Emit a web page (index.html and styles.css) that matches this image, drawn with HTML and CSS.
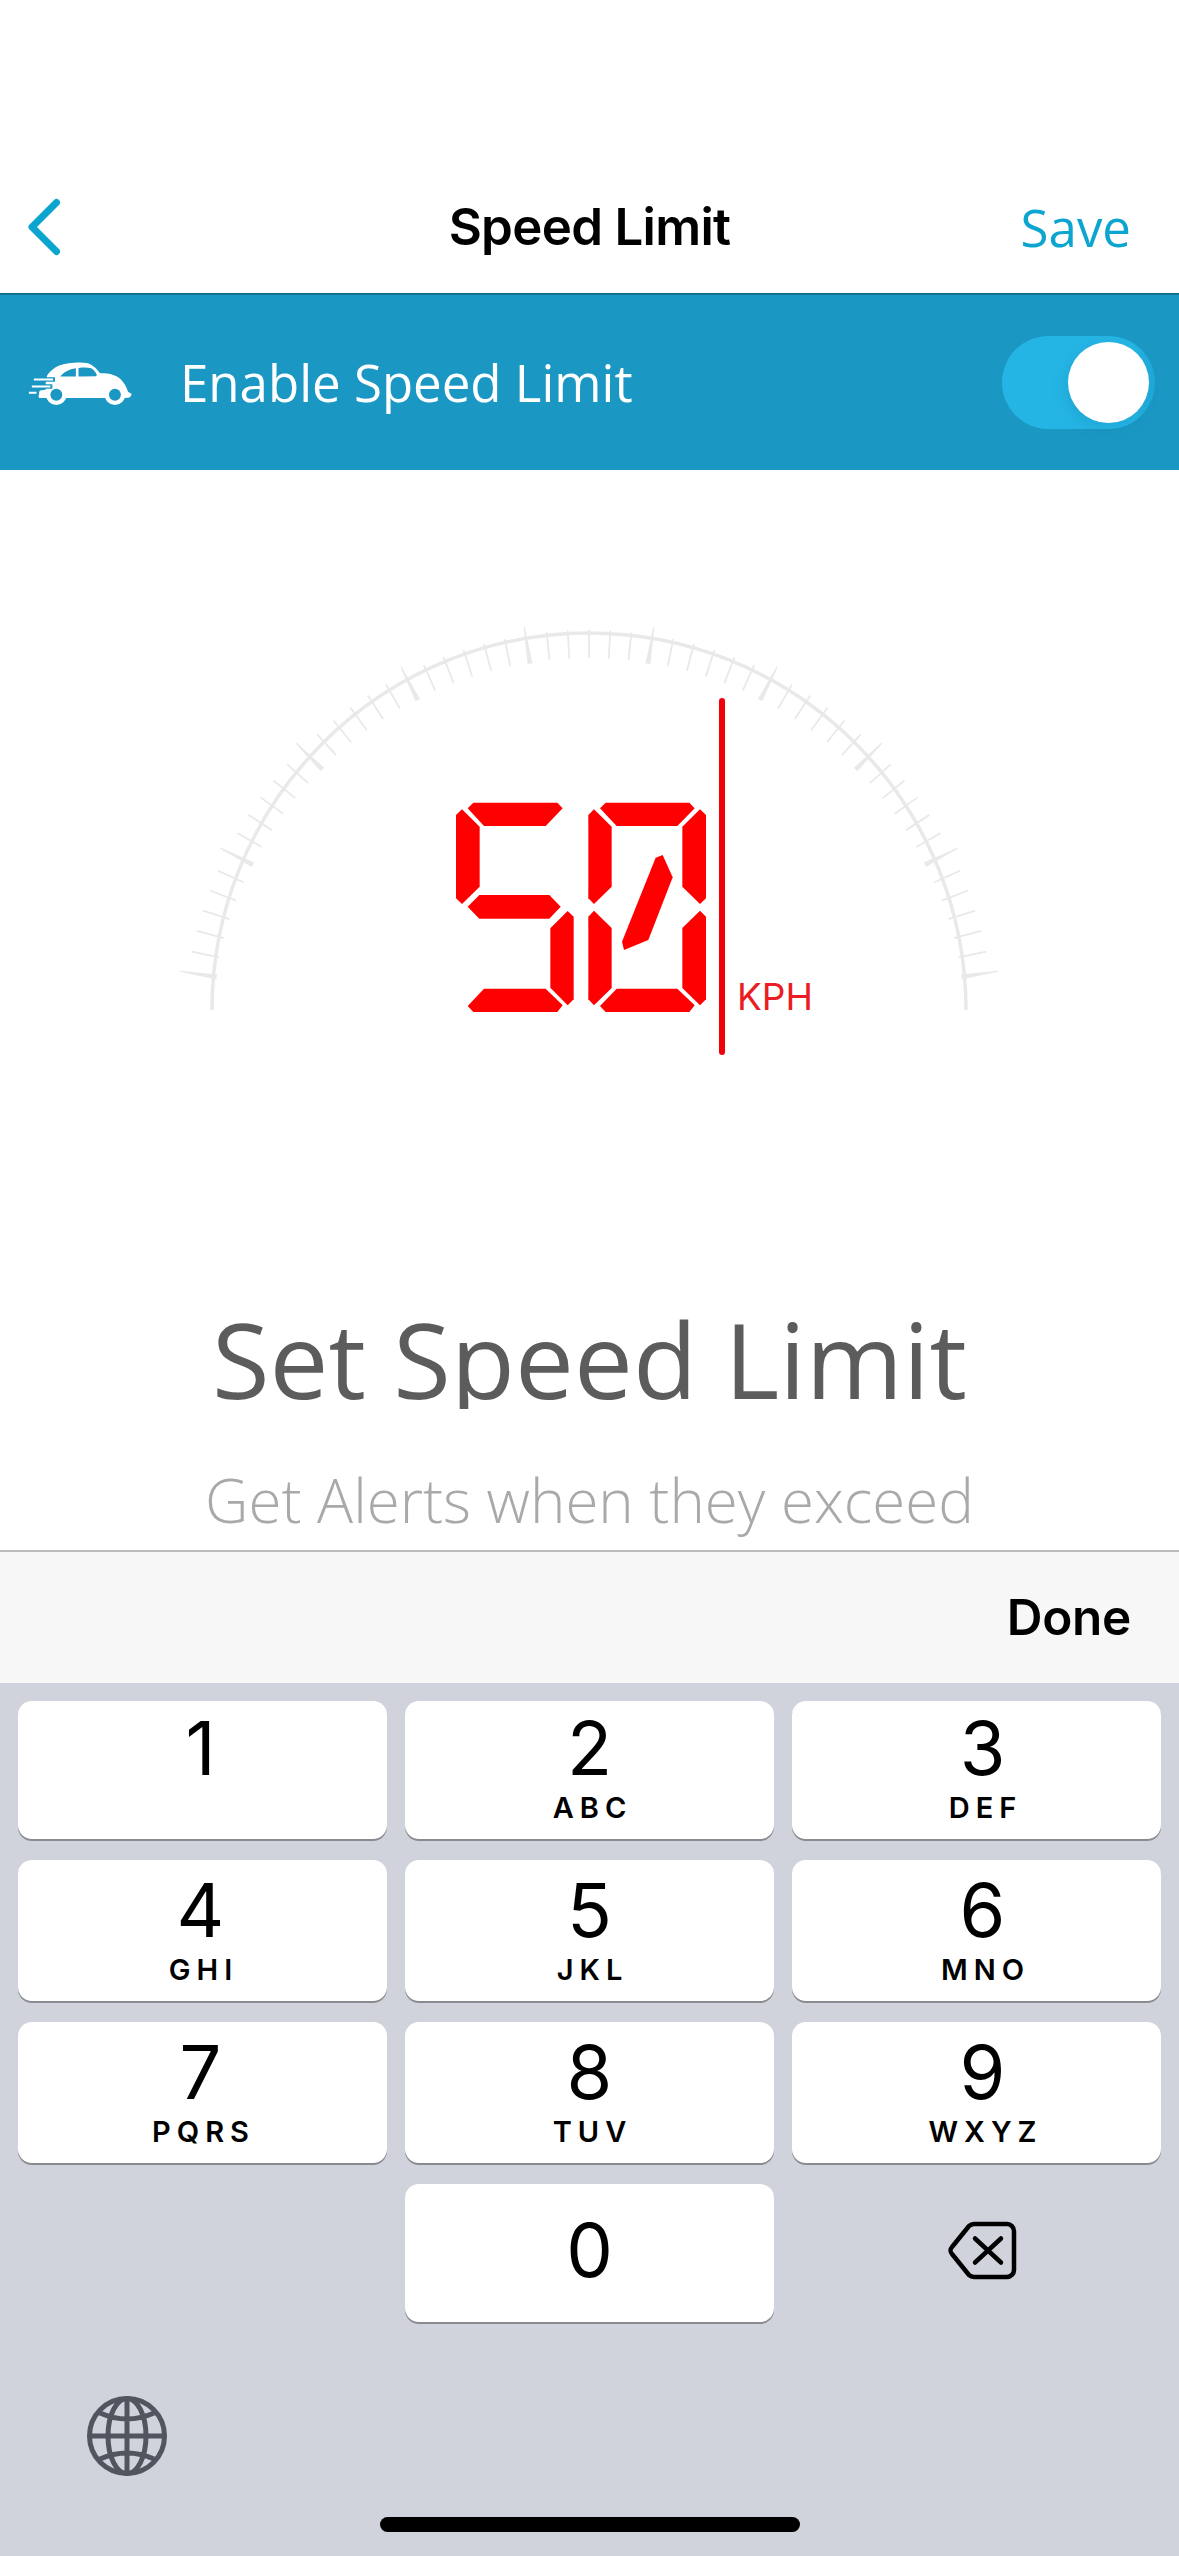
FILE: index.html
```html
<!DOCTYPE html>
<html lang="en">
<head>
<meta charset="utf-8">
<title>Speed Limit</title>
<link rel="stylesheet" href="styles.css">
</head>
<body>
<div class="app">
  <header class="nav">
    <svg class="back" viewBox="0 0 36 62" aria-hidden="true"><path d="M30.500 6.500 6 31l24.500 24.500"/></svg>
    <h1 class="nav-title">Speed Limit</h1>
    <span class="save">Save</span>
  </header>
  <section class="band">
    <svg class="car" viewBox="80 110 325 145" aria-hidden="true">
      <path class="car-body" d="M116 228c-3-8-2-16 2-23l18-2v-23l4-20c8-12 20-22 36-30 22-8 62-12 84-8 14 3 28 14 40 31 14 0 30 1 40 5 14 5 24 12 30 22 7 9 12 20 15 30l10 5c1 4-3 10-8 12l-16 1H116z"/>
      <circle class="car-body" cx="168" cy="218" r="31"/><circle class="car-hub" cx="168" cy="218" r="18"/>
      <circle class="car-body" cx="345" cy="218" r="31"/><circle class="car-hub" cx="345" cy="218" r="18"/>
      <path class="car-hub" d="M180 163c10-13 26-22 47-25v25zM235 137c14-2 28-2 38 1 7 3 13 10 17 19l-1 5-54 1z"/>
      <path class="car-gap" d="M96 172h68M90 193h66M82 212h34"/>
      <path class="car-line" d="M100 172h58M94 193h56M85 212h23"/>
    </svg>
    <span class="band-label">Enable Speed Limit</span>
    <div class="toggle"><span class="knob"></span></div>
  </section>
  <main class="content">
    <div class="gauge">
      <svg class="dial" viewBox="0 0 1179 620" aria-hidden="true">
        <defs>
          <line id="t" class="tick" x1="0" y1="-378" x2="0" y2="-406"/>
          <polygon id="T" class="major" points="-2.500,-377 2.500,-377 .6,-414 -.6,-414"/>
        </defs>
        <g transform="translate(589 566)">
          <path class="arc" d="M-377 -26A377 377 0 0 1 377 -26"/>
          <use href="#T" transform="rotate(-81)"/><use href="#t" transform="rotate(-78)"/><use href="#t" transform="rotate(-75)"/><use href="#t" transform="rotate(-72)"/><use href="#t" transform="rotate(-69)"/><use href="#t" transform="rotate(-66)"/>
          <use href="#T" transform="rotate(-63)"/><use href="#t" transform="rotate(-60)"/><use href="#t" transform="rotate(-57)"/><use href="#t" transform="rotate(-54)"/><use href="#t" transform="rotate(-51)"/><use href="#t" transform="rotate(-48)"/>
          <use href="#T" transform="rotate(-45)"/><use href="#t" transform="rotate(-42)"/><use href="#t" transform="rotate(-39)"/><use href="#t" transform="rotate(-36)"/><use href="#t" transform="rotate(-33)"/><use href="#t" transform="rotate(-30)"/>
          <use href="#T" transform="rotate(-27)"/><use href="#t" transform="rotate(-24)"/><use href="#t" transform="rotate(-21)"/><use href="#t" transform="rotate(-18)"/><use href="#t" transform="rotate(-15)"/><use href="#t" transform="rotate(-12)"/>
          <use href="#T" transform="rotate(-9)"/><use href="#t" transform="rotate(-6)"/><use href="#t" transform="rotate(-3)"/><use href="#t"/><use href="#t" transform="rotate(3)"/><use href="#t" transform="rotate(6)"/>
          <use href="#T" transform="rotate(9)"/><use href="#t" transform="rotate(12)"/><use href="#t" transform="rotate(15)"/><use href="#t" transform="rotate(18)"/><use href="#t" transform="rotate(21)"/><use href="#t" transform="rotate(24)"/>
          <use href="#T" transform="rotate(27)"/><use href="#t" transform="rotate(30)"/><use href="#t" transform="rotate(33)"/><use href="#t" transform="rotate(36)"/><use href="#t" transform="rotate(39)"/><use href="#t" transform="rotate(42)"/>
          <use href="#T" transform="rotate(45)"/><use href="#t" transform="rotate(48)"/><use href="#t" transform="rotate(51)"/><use href="#t" transform="rotate(54)"/><use href="#t" transform="rotate(57)"/><use href="#t" transform="rotate(60)"/>
          <use href="#T" transform="rotate(63)"/><use href="#t" transform="rotate(66)"/><use href="#t" transform="rotate(69)"/><use href="#t" transform="rotate(72)"/><use href="#t" transform="rotate(75)"/><use href="#t" transform="rotate(78)"/>
          <use href="#T" transform="rotate(81)"/>
        </g>
      </svg>
      <svg class="segments" viewBox="0 0 1260 1200" role="img" aria-label="50">
        <g class="seg">
          <polygon points="143,385 160,368 412,368 428,385 377,438 192,438"/>
          <polygon points="108,405 126,388 179,440 179,620 126,672 108,655"/>
          <polygon points="143,680 178,645 388,645 422,680 388,716 178,716"/>
          <polygon points="391,745 443,693 461,710 461,958 443,976 391,923"/>
          <polygon points="143,978 192,926 377,926 428,976 412,996 160,996"/>
          <polygon points="540,385 557,368 808,368 824,385 772,438 590,438"/>
          <polygon points="505,405 522,388 575,440 575,620 522,672 505,655"/>
          <polygon points="505,710 522,692 575,744 575,924 522,976 505,958"/>
          <polygon points="787,440 840,388 858,405 858,655 840,672 787,620"/>
          <polygon points="787,744 840,692 858,710 858,958 840,976 787,924"/>
          <polygon points="540,978 590,926 772,926 824,976 808,996 557,996"/>
          <polygon points="707,533 728,525 758,592 685,780 612,810 606,785"/>
        </g>
      </svg>
      <span class="divider"></span>
      <span class="unit">KPH</span>
    </div>
    <h2 class="headline">Set Speed Limit</h2>
    <p class="subline">Get Alerts when they exceed</p>
  </main>
  <div class="accessory"><span class="done">Done</span></div>
  <section class="keyboard">
    <div class="keys">
      <div class="key"><span class="num">1</span><span class="let">&nbsp;</span></div>
      <div class="key"><span class="num">2</span><span class="let">ABC</span></div>
      <div class="key"><span class="num">3</span><span class="let">DEF</span></div>
      <div class="key"><span class="num">4</span><span class="let">GHI</span></div>
      <div class="key"><span class="num">5</span><span class="let">JKL</span></div>
      <div class="key"><span class="num">6</span><span class="let">MNO</span></div>
      <div class="key"><span class="num">7</span><span class="let">PQRS</span></div>
      <div class="key"><span class="num">8</span><span class="let">TUV</span></div>
      <div class="key"><span class="num">9</span><span class="let">WXYZ</span></div>
      <div class="key-empty"></div>
      <div class="key key-zero"><span class="num">0</span></div>
      <div class="key-empty key-del">
        <svg class="del" viewBox="0 0 69 59" aria-hidden="true">
          <path d="M26 3h33a7 7 0 0 1 7 7v39a7 7 0 0 1-7 7H26a8 8 0 0 1-5-2L4 33a5 5 0 0 1 0-7L21 5a8 8 0 0 1 5-2z"/>
          <path d="M27 17.500l26 24M53 17.500l-26 24"/>
        </svg>
      </div>
    </div>
    <svg class="globe" viewBox="0 0 80 80" aria-hidden="true">
      <circle cx="40" cy="40" r="37.500"/>
      <ellipse cx="40" cy="40" rx="19" ry="37.500"/>
      <path d="M40 2.500v75M2.500 40h75M13 17Q40 29 67 17M13 63Q40 51 67 63"/>
    </svg>
    <span class="home-bar"></span>
  </section>
</div>
</body>
</html>
```
FILE: styles.css
```css
* { box-sizing: border-box; margin: 0; padding: 0; }
html, body { width: 1179px; height: 2556px; overflow: hidden; background: #fff; }
.app { width: 1179px; height: 2556px; display: flex; flex-direction: column; font-family: Inter, "Liberation Sans", sans-serif; }

.nav { height: 293px; flex: none; padding: 160px 48px 0 26px; display: flex; align-items: center; justify-content: space-between; position: relative; }
.back { width: 36px; height: 62px; fill: none; stroke: #0ba5d0; stroke-width: 7; stroke-linecap: round; stroke-linejoin: round; }
.nav-title { position: absolute; left: 0; right: 0; top: 197px; text-align: center; font-size: 51px; line-height: 60px; font-weight: 600; letter-spacing: -.7px; color: #000; }
.save { font-family: "Open Sans", sans-serif; font-size: 51px; color: #0ba5d0; }

.band { height: 177px; flex: none; background: #1a97c2; border-top: 2px solid #14708f; display: flex; align-items: center; padding: 0 24px 0 27px; }
.car { width: 108px; height: 48px; flex: none; }
.car-body { fill: #fff; }
.car-hub { fill: #1a97c2; }
.car-gap { fill: none; stroke: #1a97c2; stroke-width: 13; }
.car-line { fill: none; stroke: #fff; stroke-width: 6; }
.band-label { margin: 0 0 2px 45px; flex: 1; font-family: "Open Sans", sans-serif; font-size: 51px; font-weight: 400; color: #fff; }
.toggle { width: 153px; height: 93px; border-radius: 47px; background: linear-gradient(90deg, #25b5e4 85%, #1fa8d6); position: relative; }
.knob { position: absolute; left: 66px; top: 6px; width: 81px; height: 81px; border-radius: 50%; background: #fff; box-shadow: -3px 5px 14px rgba(20,120,170,.22); }

.content { flex: 1; min-height: 0; overflow: hidden; display: flex; flex-direction: column; align-items: center; }
.gauge { width: 1179px; height: 620px; flex: none; position: relative; }
.dial, .segments { position: absolute; }
.dial { left: 0; top: 0; width: 1179px; height: 620px; }
.arc { fill: none; stroke: #e9e9e9; stroke-width: 3.500; }
.tick { stroke: #e9e9e9; stroke-width: 1.800; }
.major { fill: #e9e9e9; }
.segments { left: 420px; top: 210px; width: 420px; height: 400px; }
.seg { fill: #fe0000; }
.divider { position: absolute; left: 719px; top: 228px; width: 6px; height: 357px; border-radius: 3px; background: #f00008; }
.unit { position: absolute; left: 737px; top: 505px; font-family: Inter, sans-serif; font-size: 37px; line-height: 44px; color: #ea1c24; }
.headline { margin-top: 206px; height: 113px; overflow: hidden; font-family: "Open Sans", sans-serif; font-weight: 400; font-size: 105px; line-height: 126px; color: #5c5c5c; white-space: nowrap; }
.subline { margin-top: 51px; font-family: "Open Sans", sans-serif; font-weight: 300; font-size: 60px; line-height: 80px; color: #a9a9a9; white-space: nowrap; }

.accessory { height: 133px; flex: none; background: #f7f7f7; border-top: 2px solid #bcbcbc; display: flex; align-items: center; justify-content: flex-end; padding: 0 48px 2px 0; }
.done { font-size: 49.500px; font-weight: 600; color: #000; letter-spacing: -.3px; }

.keyboard { height: 873px; flex: none; background: #d0d3db; padding: 18px 18px 0; position: relative; }
.keys { display: grid; grid-template-columns: repeat(3, 369px); grid-template-rows: 138px 141px 141px 138px; column-gap: 18px; row-gap: 21px; }
.key { background: #fff; border-radius: 14px; box-shadow: 0 2px 0 #8a8b90; display: flex; flex-direction: column; align-items: center; }
.key:nth-child(3n+1) { padding-right: 4px; }
.key:nth-child(3n) { padding-left: 12px; }
.key:nth-child(n+4):nth-child(-n+9) { padding-top: 3px; }
.key-empty { display: flex; align-items: center; justify-content: center; }
.num { font-size: 74px; line-height: 74px; margin-top: 10px; font-weight: 400; color: #000; }
.let { font-size: 29px; line-height: 32px; margin-top: 7px; font-weight: 600; letter-spacing: 6px; margin-right: -6px; color: #000; }
.key-zero { justify-content: center; padding-bottom: 6px; }
.key-zero .num { margin-top: 0; }
.key-del { padding: 0 0 6px 12px; }
.del { width: 69px; height: 59px; fill: none; stroke: #000; stroke-width: 4.500; stroke-linecap: round; stroke-linejoin: round; }
.globe { position: absolute; left: 87px; top: 713px; width: 80px; height: 80px; fill: none; stroke: #50555f; stroke-width: 5; }
.home-bar { position: absolute; left: 380px; top: 834px; width: 420px; height: 15px; border-radius: 8px; background: #000; }
```
